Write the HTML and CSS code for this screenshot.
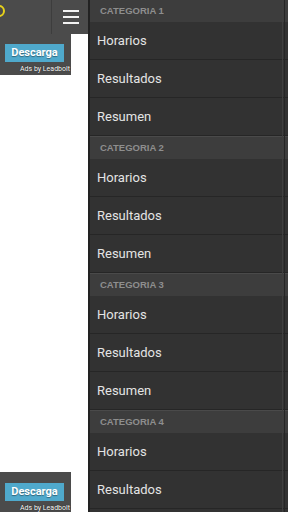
FILE: index.html
```html
<!DOCTYPE html>
<html>
<head>
<meta charset="utf-8">
<link rel="stylesheet" href="styles.css">
</head>
<body>
<div class="app">
  <div class="main">
    <div class="topbar">
      <div class="logo"></div>
      <div class="sep"></div>
      <div class="burger"><span></span><span></span><span></span></div>
    </div>
    <div class="ad ad-top">
      <div class="btn">Descarga</div>
      <div class="by">Ads by Leadbolt</div>
    </div>
    <div class="content"></div>
    <div class="ad ad-bottom">
      <div class="btn">Descarga</div>
      <div class="by">Ads by Leadbolt</div>
    </div>
  </div>
  <nav class="menu">
    <div class="cat">CATEGORIA 1</div>
    <div class="item">Horarios</div>
    <div class="item">Resultados</div>
    <div class="item">Resumen</div>
    <div class="cat">CATEGORIA 2</div>
    <div class="item">Horarios</div>
    <div class="item">Resultados</div>
    <div class="item">Resumen</div>
    <div class="cat">CATEGORIA 3</div>
    <div class="item">Horarios</div>
    <div class="item">Resultados</div>
    <div class="item">Resumen</div>
    <div class="cat">CATEGORIA 4</div>
    <div class="item">Horarios</div>
    <div class="item">Resultados</div>
    <div class="item">Resumen</div>
    <div class="edge"></div>
  </nav>
</div>
</body>
</html>
```
FILE: styles.css
```css
* { box-sizing: border-box; }
html, body { margin: 0; padding: 0; height: 100%; overflow: hidden; }
body { font-family: Roboto, "Noto Sans", sans-serif; background: #fff; }
.app { display: flex; width: 288px; height: 512px; overflow: hidden; }
.main { width: 88px; flex: none; display: flex; flex-direction: column; background: #fff; position: relative; }
.topbar { height: 34px; background: #4b4b4b; display: flex; align-items: stretch; position: relative; flex: none; }
.logo { position: absolute; left: -7px; top: 5px; width: 12px; height: 12px; border: 2px solid #e8d21a; border-radius: 50%; }
.sep { width: 1px; background: #3d3d3d; margin-left: 51px; }
.burger { display: flex; flex-direction: column; gap: 4px; margin-left: 11px; padding-top: 10px; }
.burger span { display: block; width: 16px; height: 2px; background: #f2f2f2; }
.ad { width: 71px; background: #4b4b4b; display: flex; flex-direction: column; align-items: flex-end; flex: none; }
.ad-top { height: 41px; padding-top: 10px; }
.ad-bottom { height: 40px; padding-top: 11px; }
.content { flex: 1; }
.btn { width: 59px; margin-right: 7px; height: 18px; background: #4fa9cc; color: #fff; font-weight: bold; font-size: 11px; text-align: center; line-height: 18px; text-shadow: 0 1px 1px rgba(0,0,0,0.4); }
.by { font-size: 7px; color: #fff; margin-right: 1px; margin-top: 3px; line-height: 8px; text-shadow: 0 0 1px #000; }
.menu { flex: 1; background: #323232; border-left: 2px solid #222; display: flex; flex-direction: column; position: relative; }
.cat { height: 23px; flex: none; background: #3d3d3d; border-top: 1px solid #4a4a4a; color: #8e8e8e; font-family: "Liberation Sans", Arial, sans-serif; font-weight: bold; font-size: 9.5px; padding-left: 10px; line-height: 21px; }
.cat:first-child { border-top: none; height: 22px; line-height: 21px; }
.item { height: 38px; flex: none; color: #e4e4e4; font-size: 13px; padding-left: 7px; line-height: 37px; border-bottom: 1px solid #262626; }
.edge { position: absolute; top: 0; bottom: 0; right: 3px; width: 3px; border-left: 1px solid #3f3f3f; border-right: 1px solid #262626; }
```
